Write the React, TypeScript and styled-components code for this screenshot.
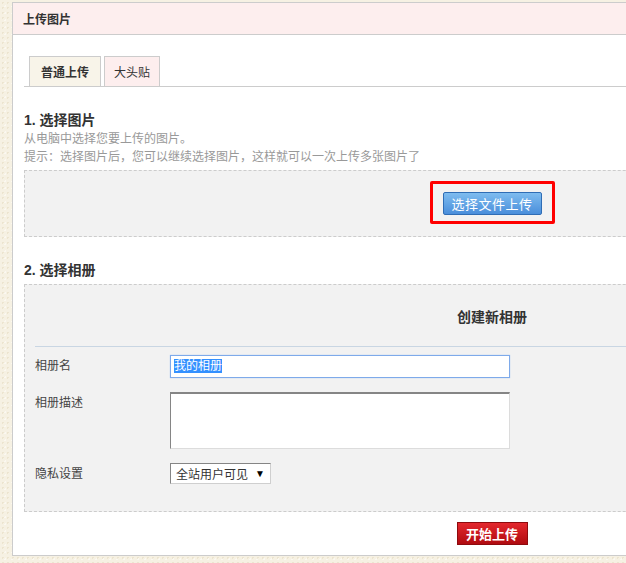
import React from "react";
import styled, { createGlobalStyle } from "styled-components";

const GlobalStyle = createGlobalStyle`
  html, body {
    overflow: hidden;
  }
  body {
    margin: 2px 0 0 12px;
    background-color: #f6f1e3;
    background-image:
      radial-gradient(rgba(220, 205, 170, 0.35) 1px, transparent 1px),
      radial-gradient(rgba(255, 255, 255, 0.5) 1px, transparent 1px);
    background-size: 5px 5px, 7px 7px;
    background-position: 0 0, 2px 3px;
    font-family: "Liberation Sans", "Noto Sans CJK SC", sans-serif;
    font-size: 12px;
    color: #333;
  }
`;

const Panel = styled.div`
  width: 958px;
  background: #fff;
  border: 1px solid #cccccc;
`;

const PanelHeader = styled.div`
  box-sizing: border-box;
  height: 32px;
  padding: 3px 0 0 10px;
  line-height: 29px;
  background: #fdeeee;
  border-bottom: 1px solid #cccccc;
  font-weight: bold;
  font-size: 12px;
  color: #333;
`;

const PanelBody = styled.div`
  padding: 0 11px 10px;
`;

const TabBar = styled.div`
  display: flex;
  gap: 3px;
  margin-top: 21px;
  padding-left: 5px;
  border-bottom: 1px solid #cccccc;
`;

const Tab = styled.div<{ $active?: boolean }>`
  box-sizing: border-box;
  height: 30px;
  padding: 3px ${(p) => (p.$active ? 11 : 9)}px 0;
  line-height: 26px;
  border: 1px solid #cccccc;
  border-bottom: none;
  background: ${(p) => (p.$active ? "#f8f4e9" : "#fdeeee")};
  font-weight: ${(p) => (p.$active ? "bold" : "normal")};
  font-size: 12px;
  color: #333;
`;

const SectionTitle = styled.h3`
  margin: 23px 0 0;
  padding-top: 1px;
  font-size: 14px;
  line-height: 19px;
  font-weight: bold;
  color: #333;
`;

const Hint = styled.p`
  margin: 0;
  font-size: 12px;
  line-height: 18px;
  color: #999;
`;

const DashedBox = styled.div`
  margin-top: 4px;
  background: #f2f2f2;
  border: 1px dashed #cccccc;
`;

const UploadArea = styled(DashedBox)`
  display: flex;
  justify-content: center;
  padding: 10px 0 12px;
`;

const Highlight = styled.div`
  padding: 8px 10px 6px;
  border: 3px solid #ff0000;
  border-radius: 2px;
`;

const BlueButton = styled.button`
  width: 99px;
  height: 23px;
  padding: 0;
  border: 1px solid #2f6db5;
  border-radius: 2px;
  background: linear-gradient(#7ebcef, #4a8edb);
  color: #fff;
  font-family: "Noto Sans CJK SC", sans-serif;
  font-size: 13px;
  line-height: 21px;
  letter-spacing: 0.5px;
`;

const AlbumBox = styled(DashedBox)`
  padding: 10px;
`;

const AlbumTitle = styled.div`
  padding: 12px 0 19px;
  line-height: 20px;
  text-align: center;
  font-size: 14px;
  font-weight: bold;
  color: #333;
  border-bottom: 1px solid #c9d6e3;
`;

const FormGrid = styled.div`
  display: grid;
  grid-template-columns: 135px 1fr;
  row-gap: 14px;
  padding: 8px 0 15px;
`;

const Label = styled.div`
  line-height: 23px;
  font-size: 12px;
  color: #444;
`;

const FakeInput = styled.div`
  box-sizing: border-box;
  width: 340px;
  height: 23px;
  padding: 3px 3px;
  background: #fff;
  border: 1px solid #7eaaea;
  box-shadow: 0 0 1px #9fc0f3;
  line-height: 15px;
`;

const Selected = styled.span`
  background: #3390ff;
  color: #fff;
  font-size: 12px;
`;

const TextArea = styled.div`
  box-sizing: border-box;
  width: 340px;
  height: 57px;
  background: #fff;
  border: 1px solid;
  border-color: #858585 #dcdcdc #dcdcdc #858585;
  border-top-width: 2px;
`;

const FakeSelect = styled.div`
  box-sizing: border-box;
  display: flex;
  align-items: center;
  justify-content: space-between;
  width: 101px;
  height: 21px;
  padding: 0 5px 0 5px;
  background: #fff;
  border: 1px solid;
  border-color: #858585 #cfcfcf #cfcfcf #858585;
  font-size: 12px;
  color: #333;
`;

const Arrow = styled.span`
  font-size: 10px;
  color: #000;
`;

const Footer = styled.div`
  display: flex;
  justify-content: center;
  margin-top: 10px;
`;

const RedButton = styled.button`
  width: 71px;
  height: 23px;
  padding: 0;
  border: 1px solid #8e0a0e;
  background: linear-gradient(#e3272d, #b00b10);
  color: #fff;
  font-family: "Noto Sans CJK SC", sans-serif;
  font-size: 13px;
  font-weight: bold;
  line-height: 21px;
`;

const App = () => {
  return (
    <>
      <GlobalStyle />
      <Panel>
        <PanelHeader>上传图片</PanelHeader>
        <PanelBody>
          <TabBar>
            <Tab $active>普通上传</Tab>
            <Tab>大头贴</Tab>
          </TabBar>

          <SectionTitle>1. 选择图片</SectionTitle>
          <Hint>从电脑中选择您要上传的图片。</Hint>
          <Hint>提示：选择图片后，您可以继续选择图片，这样就可以一次上传多张图片了</Hint>
          <UploadArea>
            <Highlight>
              <BlueButton>选择文件上传</BlueButton>
            </Highlight>
          </UploadArea>

          <SectionTitle>2. 选择相册</SectionTitle>
          <AlbumBox>
            <AlbumTitle>创建新相册</AlbumTitle>
            <FormGrid>
              <Label>相册名</Label>
              <FakeInput>
                <Selected>我的相册</Selected>
              </FakeInput>
              <Label>相册描述</Label>
              <TextArea />
              <Label>隐私设置</Label>
              <FakeSelect>
                全站用户可见
                <Arrow>▼</Arrow>
              </FakeSelect>
            </FormGrid>
          </AlbumBox>

          <Footer>
            <RedButton>开始上传</RedButton>
          </Footer>
        </PanelBody>
      </Panel>
    </>
  );
};

export default App;
